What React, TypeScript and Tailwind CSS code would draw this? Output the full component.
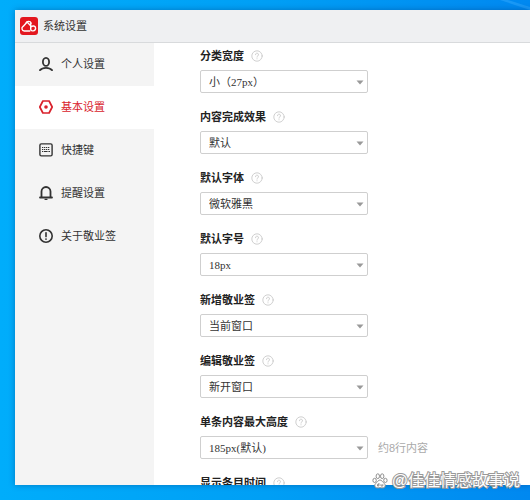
import type { ReactNode } from "react";

type NavItem = {
  label: string;
  icon: ReactNode;
};

type Setting = {
  id: string;
  label: string;
  value: string;
  note?: string;
};

const strokeProps = {
  fill: "none",
  stroke: "currentColor",
  strokeLinecap: "round",
  strokeLinejoin: "round"
} as const;

function UserIcon() {
  return (
    <svg viewBox="0 0 14 14" className="size-[14px]" strokeWidth="1.8" aria-hidden="true" {...strokeProps}>
      <ellipse cx="7" cy="4.9" rx="3.1" ry="4" />
      <path d="M1 13.200C2.600 11.300 4.600 10.800 7 10.800s4.400.500 6 2.400" />
    </svg>
  );
}

function HexIcon() {
  return (
    <svg viewBox="0 0 14 14" className="size-[14px]" strokeWidth="1.7" aria-hidden="true" {...strokeProps}>
      <path d="M3.9 1h6.2L13.200 7l-3.100 6H3.900L.8 7z" />
      <circle cx="7" cy="7" r="1.8" fill="currentColor" stroke="none" />
    </svg>
  );
}

function KeyboardIcon() {
  return (
    <svg viewBox="0 0 14 14" className="size-[14px]" strokeWidth="1.4" aria-hidden="true" {...strokeProps}>
      <rect x="0.9" y="0.9" width="12.2" height="12" rx="1.4" />
      <path d="M3 4.500h8M3 6.500h8" strokeWidth="1" strokeDasharray="1.3 0.7" strokeLinecap="butt" />
      <path d="M3 8.500h1.300M5 8.500h3.600M9.400 8.500H11" strokeWidth="1" strokeLinecap="butt" />
    </svg>
  );
}

function BellIcon() {
  return (
    <svg viewBox="0 0 14 14" className="size-[14px]" strokeWidth="1.8" aria-hidden="true" {...strokeProps}>
      <path d="M2.500 11.200V5.500a4.500 4.500 0 0 1 9 0v5.700" />
      <path d="M1 11.500h12" />
      <path d="M6 13.300h2" strokeWidth="1.2" />
    </svg>
  );
}

function AlertIcon() {
  return (
    <svg viewBox="0 0 14 14" className="size-[14px]" strokeWidth="1.6" aria-hidden="true" {...strokeProps}>
      <circle cx="7" cy="7" r="6.200" />
      <path d="M7 3.700v3.900" />
      <circle cx="7" cy="10.100" r="0.9" fill="currentColor" stroke="none" />
    </svg>
  );
}

function AppLogo() {
  return (
    <svg viewBox="0 0 18 18" className="size-[18px]" aria-hidden="true">
      <rect width="18" height="18" rx="3" fill="#e3171f" />
      <path
        d="M9.800 14H4.300a2.500 2.500 0 0 1-1.200-4.600L7.200 5l3 3.400M5.800 6.200C6.600 3.900 10.300 3.500 11.200 6.300M10.700 6.400V12c0 2.700 4.900 2.500 4.900-.8 0-2.400-3-2.900-4.700-1.300"
        fill="none"
        stroke="#fff"
        strokeWidth="1.4"
        strokeLinecap="round"
        strokeLinejoin="round"
      />
    </svg>
  );
}

function PawIcon() {
  return (
    <svg viewBox="0 0 16 16" className="size-4" fill="#fff" stroke="#8f8f8f" strokeWidth="1" aria-hidden="true">
      <ellipse cx="2.600" cy="7.400" rx="1.700" ry="2.100" />
      <ellipse cx="5.800" cy="3.200" rx="1.700" ry="2.400" />
      <ellipse cx="10.200" cy="3.200" rx="1.700" ry="2.400" />
      <ellipse cx="13.400" cy="7.400" rx="1.700" ry="2.100" />
      <path d="M8 7c1.500 0 2.200 1.400 3.300 2.500 1.300 1.200 2.200 2.100 1.900 3.600-.4 2-2.400 2-5.200 1.600-2.800.4-4.800.4-5.200-1.600-.3-1.500.6-2.400 1.900-3.600C5.800 8.400 6.500 7 8 7z" />
      <path d="M6.900 10v3H5.500v-1.600h1.400M9 11.200V13h1.800v-1.800" fill="none" />
    </svg>
  );
}

function HelpIcon() {
  return (
    <svg viewBox="0 0 12 12" className="size-3 text-[#c4c4c4]" strokeWidth="0.8" aria-hidden="true" {...strokeProps}>
      <circle cx="6" cy="6" r="5.200" />
      <path d="M4.500 4.700a1.500 1.500 0 1 1 2.300 1.200c-.6.400-.8.600-.8 1.200" />
      <circle cx="6" cy="8.700" r="0.500" fill="currentColor" stroke="none" />
    </svg>
  );
}

const navItems: NavItem[] = [
  { label: "个人设置", icon: <UserIcon /> },
  { label: "基本设置", icon: <HexIcon /> },
  { label: "快捷键", icon: <KeyboardIcon /> },
  { label: "提醒设置", icon: <BellIcon /> },
  { label: "关于敬业签", icon: <AlertIcon /> }
];

const settings: Setting[] = [
  { id: "category-width", label: "分类宽度", value: "小（27px）" },
  { id: "done-effect", label: "内容完成效果", value: "默认" },
  { id: "font-family", label: "默认字体", value: "微软雅黑" },
  { id: "font-size", label: "默认字号", value: "18px" },
  { id: "create-note", label: "新增敬业签", value: "当前窗口" },
  { id: "edit-note", label: "编辑敬业签", value: "新开窗口" },
  { id: "max-height", label: "单条内容最大高度", value: "185px(默认)", note: "约8行内容" },
  { id: "show-time", label: "显示条目时间", value: "默认" }
];

function SettingField({ setting }: { setting: Setting }) {
  return (
    <div className="flex flex-col gap-[6px]">
      <div className="flex h-4 items-center gap-[7px]">
        <label htmlFor={setting.id} className="font-bold text-[#222]">
          {setting.label}
        </label>
        <HelpIcon />
      </div>
      <div className="flex items-center gap-[10px]">
        <div className="relative w-[168px]">
          <select
            id={setting.id}
            defaultValue={setting.value}
            className="block h-[23px] w-full appearance-none rounded-[2px] border border-[#cfcfcf] bg-white px-2 font-['Liberation_Serif','Noto_Sans_CJK_SC',serif] text-[11px] text-[#333]"
          >
            <option>{setting.value}</option>
          </select>
          <svg viewBox="0 0 8 5" className="pointer-events-none absolute top-[10px] right-1 h-[5px] w-2" aria-hidden="true">
            <path d="M0.500 0.500h7L4 4.500z" fill="#999" />
          </svg>
        </div>
        {setting.note && <span className="text-[#aaa]">{setting.note}</span>}
      </div>
    </div>
  );
}

export default function App() {
  return (
    <div className="relative flex h-screen flex-col overflow-hidden bg-linear-to-r from-[#00adfb] via-[#009ff5] to-[#0088f0] pt-[10px] pb-[15px] pl-[15px] font-['Liberation_Sans','Noto_Sans_CJK_SC',sans-serif] text-[11px] leading-4 text-[#333]">
      <svg viewBox="0 0 30 10" className="absolute top-0 right-0 h-[10px] w-[30px]" aria-hidden="true">
        <path d="M0 0h8l22 7v3z" fill="#3fb0ff" opacity="0.4" />
      </svg>

      <div className="relative flex min-h-0 flex-1 flex-col bg-white shadow-[0_0_6px_rgba(0,50,110,0.4)]">
        <header className="flex h-[33px] shrink-0 items-center gap-[5px] border-b border-[#d8dadc] bg-[#eff0f2] pl-[5px]">
          <AppLogo />
          <h1>系统设置</h1>
        </header>

        <div className="flex min-h-0 flex-1">
          <nav className="w-[139px] shrink-0 bg-[#f4f4f4]">
            {navItems.map((item) => {
              const active = item.label === "基本设置";
              return (
                <a
                  key={item.label}
                  href="#"
                  aria-current={active ? "page" : undefined}
                  className={`flex h-[43px] items-center gap-2 pb-[2px] pl-[24px] ${active ? "bg-white text-[#d9222c]" : ""}`}
                >
                  {item.icon}
                  {item.label}
                </a>
              );
            })}
          </nav>

          <main className="flex min-w-0 flex-1 flex-col gap-4 overflow-hidden pt-[5px] pl-[46px]">
            {settings.map((setting) => (
              <SettingField key={setting.id} setting={setting} />
            ))}
          </main>
        </div>
      </div>

      <div className="absolute right-[10px] bottom-[9px] flex items-center gap-1 text-base leading-5 text-white">
        <PawIcon />
        <span className="[-webkit-text-stroke:2px_#999] [paint-order:stroke_fill]">@佳佳情感故事说</span>
      </div>
    </div>
  );
}
